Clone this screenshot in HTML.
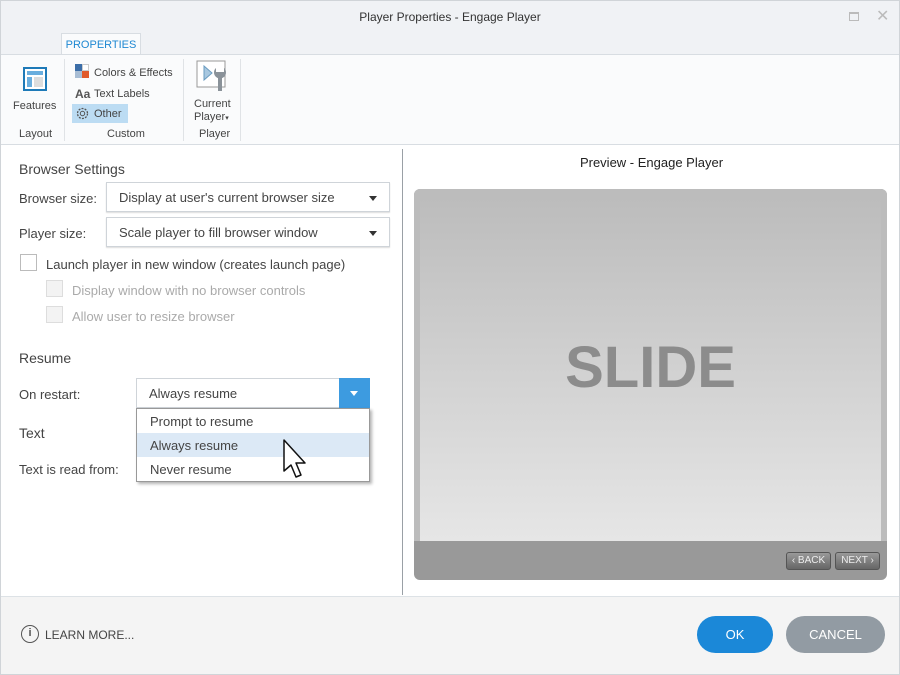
<!DOCTYPE html>
<html><head><meta charset="utf-8"><style>
*{box-sizing:border-box;margin:0;padding:0}
body{width:900px;height:675px;position:relative;font-family:"Liberation Sans",sans-serif;font-size:13px;color:#333;background:#fff;overflow:hidden}
.a{position:absolute}
.win{left:0;top:0;width:900px;height:675px;border:1px solid #d0d4d8;background:#fff}
.dd{position:absolute;border:1px solid #cfd4d9;background:#fff;height:30px;line-height:29px;padding-left:12px;color:#444;box-shadow:0 1px 1px #ddd}
.tri{position:absolute;right:12px;top:13px;width:0;height:0;border-left:4px solid transparent;border-right:4px solid transparent;border-top:5px solid #333}
.cb{position:absolute;width:17px;height:17px;border:1px solid #bbb;background:#fff}
.cbd{border-color:#ddd;background:#f3f3f3}
.gray{color:#aaa}
.r{font-size:11px;color:#444}
</style></head><body>
<div class="a win"></div>
<div class="a" style="left:1px;top:1px;width:898px;height:54px;background:#f0f2f5"></div>
<div class="a" style="left:0;top:10px;width:900px;text-align:center;font-size:12px;color:#333">Player Properties - Engage Player</div>
<div class="a" style="left:849px;top:12px;width:10px;height:9px;border:1px solid #bbb;border-top-width:2px"></div>
<div class="a" style="left:876px;top:6px;color:#bbb;font-size:16px">✕</div>
<div class="a" style="left:61px;top:33px;width:80px;height:22px;background:#fafbfc;border:1px solid #d8dde2;border-bottom:none;color:#1e88d2;font-size:11px;text-align:center;line-height:22px">PROPERTIES</div>
<div class="a" style="left:1px;top:54px;width:898px;height:91px;background:#fafbfc;border-top:1px solid #d8dde2;border-bottom:1px solid #d8dde2"></div>
<div class="a" style="left:23px;top:67px;width:24px;height:24px;border:2px solid #1e7ab8;background:#fff"></div>
<div class="a" style="left:27px;top:71px;width:16px;height:4px;background:#6aaede"></div>
<div class="a" style="left:27px;top:77px;width:5px;height:10px;background:#6aaede"></div>
<div class="a" style="left:34px;top:77px;width:9px;height:10px;background:#ddd"></div>
<div class="a r" style="left:13px;top:100px">Features</div>
<div class="a r" style="left:19px;top:128px">Layout</div>
<div class="a" style="left:64px;top:59px;width:1px;height:82px;background:#e0e3e6"></div>
<div class="a" style="left:75px;top:64px;width:7px;height:7px;background:#3c6ea8"></div>
<div class="a" style="left:82px;top:64px;width:7px;height:7px;background:#fff;border:1px solid #ccc"></div>
<div class="a" style="left:75px;top:71px;width:7px;height:7px;background:#a8bdd4"></div>
<div class="a" style="left:82px;top:71px;width:7px;height:7px;background:#e05a2b"></div>
<div class="a r" style="left:94px;top:67px">Colors &amp; Effects</div>
<div class="a" style="left:75px;top:87px;font-size:12px;font-weight:bold;color:#555">Aa</div>
<div class="a r" style="left:94px;top:88px">Text Labels</div>
<div class="a" style="left:72px;top:104px;width:56px;height:19px;background:#bcdcf3"></div>
<svg class="a" style="left:75px;top:106px" width="15" height="15"><circle cx="7.5" cy="7.5" r="5" fill="none" stroke="#555" stroke-width="1.3" stroke-dasharray="2 1.2"/><circle cx="7.5" cy="7.5" r="2.2" fill="none" stroke="#555"/></svg>
<div class="a r" style="left:94px;top:108px">Other</div>
<div class="a r" style="left:107px;top:128px">Custom</div>
<div class="a" style="left:183px;top:59px;width:1px;height:82px;background:#e0e3e6"></div>
<svg class="a" style="left:196px;top:60px" width="36" height="34"><rect x="1" y="1" width="28" height="26" fill="#fff" stroke="#999"/><path d="M8 6 L16 13 L8 20Z" fill="#a8c8e0" stroke="#6a9cc0"/><path d="M20 8 a6 6 0 1 0 8 0 v4 h-8z M22 14 v17 h4 v-17" fill="#8a9299"/></svg>
<div class="a r" style="left:194px;top:98px;line-height:13px">Current<br>Player<span style="font-size:7px">▾</span></div>
<div class="a r" style="left:199px;top:128px">Player</div>
<div class="a" style="left:240px;top:59px;width:1px;height:82px;background:#e0e3e6"></div>

<div class="a" style="left:19px;top:161px;font-size:14px;color:#444">Browser Settings</div>
<div class="a" style="left:19px;top:191px;color:#444">Browser size:</div>
<div class="dd" style="left:106px;top:182px;width:284px">Display at user's current browser size<div class="tri"></div></div>
<div class="a" style="left:19px;top:226px;color:#444">Player size:</div>
<div class="dd" style="left:106px;top:217px;width:284px">Scale player to fill browser window<div class="tri"></div></div>
<div class="cb" style="left:20px;top:254px"></div>
<div class="a" style="left:46px;top:257px;color:#444">Launch player in new window (creates launch page)</div>
<div class="cb cbd" style="left:46px;top:280px"></div>
<div class="a gray" style="left:72px;top:283px">Display window with no browser controls</div>
<div class="cb cbd" style="left:46px;top:306px"></div>
<div class="a gray" style="left:72px;top:309px">Allow user to resize browser</div>
<div class="a" style="left:19px;top:350px;font-size:14px;color:#444">Resume</div>
<div class="a" style="left:19px;top:387px;color:#444">On restart:</div>
<div class="dd" style="left:136px;top:378px;width:234px;box-shadow:none">Always resume</div>
<div class="a" style="left:339px;top:378px;width:31px;height:30px;background:#3d9be0"></div>
<div class="a" style="left:350px;top:391px;border-left:4px solid transparent;border-right:4px solid transparent;border-top:5px solid #fff"></div>
<div class="a" style="left:19px;top:425px;font-size:14px;color:#444">Text</div>
<div class="a" style="left:19px;top:462px;color:#444">Text is read from:</div>
<div class="a" style="left:136px;top:408px;width:234px;height:74px;background:#fff;border:1px solid #999;box-shadow:2px 2px 3px rgba(0,0,0,.3)"></div>
<div class="a" style="left:137px;top:433px;width:232px;height:24px;background:#dce9f6"></div>
<div class="a" style="left:150px;top:414px;color:#444">Prompt to resume</div>
<div class="a" style="left:150px;top:438px;color:#444">Always resume</div>
<div class="a" style="left:150px;top:462px;color:#444">Never resume</div>
<svg class="a" style="left:282px;top:438px" width="30" height="44"><path d="M2 2 L2 33 L9 27 L14 39 L19 37 L14 25 L23 25 Z" fill="#fff" stroke="#111" stroke-width="1.5" stroke-linejoin="round"/></svg>

<div class="a" style="left:402px;top:149px;width:1px;height:446px;background:#9aa0a6"></div>
<div class="a" style="left:403px;top:155px;width:497px;text-align:center;color:#222">Preview - Engage Player</div>
<div class="a" style="left:414px;top:189px;width:473px;height:391px;border-radius:6px;background:#999"></div>
<div class="a" style="left:414px;top:189px;width:473px;height:352px;border-radius:6px 6px 0 0;background:#bcbcbc"></div>
<div class="a" style="left:420px;top:196px;width:461px;height:345px;background:linear-gradient(#bcbcbc,#e6e6e6)"></div>
<div class="a" style="left:420px;top:334px;width:461px;text-align:center;font-size:58px;font-weight:bold;color:#8c8c8c">SLIDE</div>
<div class="a" style="left:786px;top:552px;width:45px;height:18px;border-radius:3px;background:linear-gradient(#999,#666);border:1px solid #555;color:#eee;font-size:10px;line-height:16px;text-align:center">‹ BACK</div>
<div class="a" style="left:835px;top:552px;width:45px;height:18px;border-radius:3px;background:linear-gradient(#999,#666);border:1px solid #555;color:#eee;font-size:10px;line-height:16px;text-align:center">NEXT ›</div>

<div class="a" style="left:1px;top:596px;width:898px;height:78px;background:#f4f4f4;border-top:1px solid #dde2e6"></div>
<div class="a" style="left:21px;top:625px;width:18px;height:18px;border:1.5px solid #555;border-radius:50%;font-size:11px;text-align:center;line-height:15px;font-weight:bold;color:#555">i</div>
<div class="a" style="left:45px;top:628px;font-size:12px;color:#444">LEARN MORE...</div>
<div class="a" style="left:697px;top:616px;width:76px;height:37px;border-radius:19px;background:#1b88d8;color:#fff;text-align:center;line-height:38px">OK</div>
<div class="a" style="left:786px;top:616px;width:99px;height:37px;border-radius:19px;background:#929ba3;color:#fff;text-align:center;line-height:38px">CANCEL</div>
</body></html>
